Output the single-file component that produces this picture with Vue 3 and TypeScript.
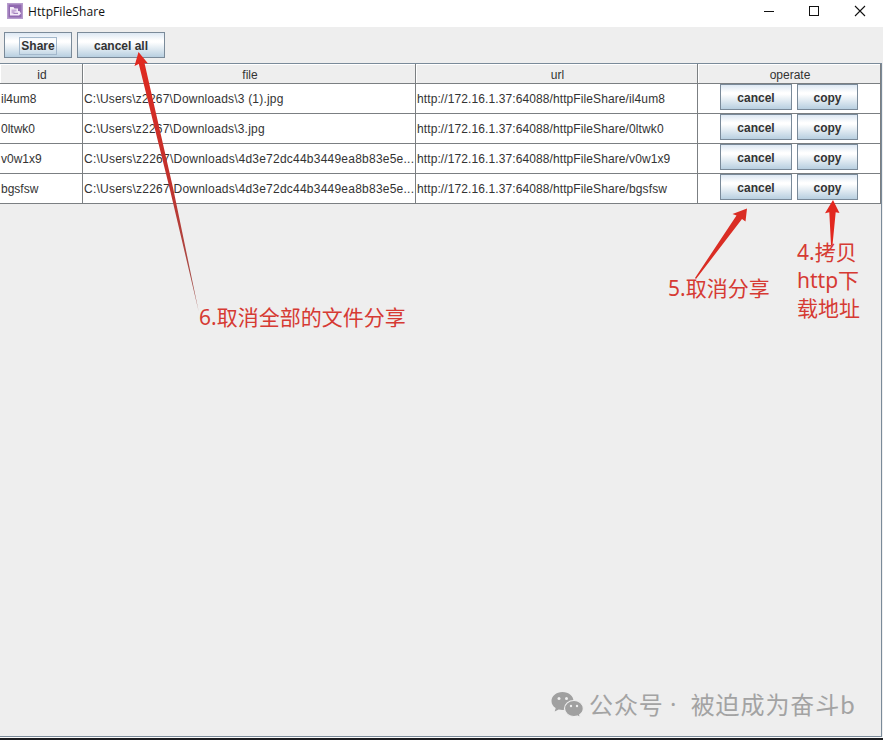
<script setup lang="ts">
interface SharedFile {
  id: string
  file: string
  url: string
}

const base = 'http://172.16.1.37:64088/httpFileShare/'
const downloads = 'C:\\Users\\z2267\\Downloads\\'

const files: SharedFile[] = [
  { id: 'il4um8', file: downloads + '3 (1).jpg', url: base + 'il4um8' },
  { id: '0ltwk0', file: downloads + '3.jpg', url: base + '0ltwk0' },
  { id: 'v0w1x9', file: downloads + '4d3e72dc44b3449ea8b83e5e...', url: base + 'v0w1x9' },
  { id: 'bgsfsw', file: downloads + '4d3e72dc44b3449ea8b83e5e...', url: base + 'bgsfsw' },
]

const columns: string[] = ['id', 'file', 'url', 'operate']
</script>

<template>
  <div class="window">
    <header class="titlebar">
      <svg class="app-icon" width="16" height="16" viewBox="0 0 16 16">
        <rect width="16" height="16" fill="#b79ccd" />
        <rect x="1.500" y="1.500" width="13" height="13" fill="#9068b0" />
        <path d="M3 4h3.500l1 1.500H11V8h1.500l1.500 2.500-2 2H3z" fill="#f4ebf8" />
        <path d="M4.500 6.500h5V8.500h-2v2h-3z" fill="#c4a9d6" />
        <path d="M6.500 10.300h4.500" stroke="#9068b0" />
      </svg>
      <span class="title">HttpFileShare</span>
      <svg class="controls" width="102" height="12" viewBox="0 0 102 12" fill="none" stroke="#111">
        <path d="M0 6.500h10" />
        <rect x="45.500" y="1.500" width="9" height="9" />
        <path d="M91 1l10 10M101 1L91 11" stroke-width="1.100" />
      </svg>
    </header>

    <div class="toolbar">
      <button class="btn share"><span class="focus">Share</span></button>
      <button class="btn all">cancel all</button>
    </div>

    <main class="pane">
      <div class="row head">
        <div v-for="name in columns" :key="name" class="cell">{{ name }}</div>
      </div>
      <div v-for="item in files" :key="item.id" class="row">
        <div class="cell">{{ item.id }}</div>
        <div class="cell path" :class="{ clipped: item.file.endsWith('...') }">{{ item.file }}</div>
        <div class="cell url">{{ item.url }}</div>
        <div class="cell actions">
          <button class="btn cancel">cancel</button>
          <button class="btn copy">copy</button>
        </div>
      </div>
    </main>
    <div class="desktop-edge"></div>

    <svg class="arrows" width="883" height="740" viewBox="0 0 883 740">
      <defs>
        <linearGradient id="longShaft" x1="0" y1="0" x2="0" y2="1">
          <stop offset="0" stop-color="#e2281f" />
          <stop offset="0.5" stop-color="#c0322d" />
          <stop offset="1" stop-color="#9e5550" />
        </linearGradient>
      </defs>
      <path d="M138.500 52l9.500 11.500-3.500-.5L173.500 190 198.800 312 170 190 138.800 64l-4.300 2z" fill="url(#longShaft)" />
      <path d="M747 208.500l-1.500 13-3.500-2.500L696 279l-1-1 41.500-62.500-4-1.500z" fill="#da2d24" />
      <path d="M833 200l6.500 13-3.800-.7L832.500 245h-1.500l-1.700-32.700-4.300.9z" fill="#e2281f" />
    </svg>

    <p class="note note-all">6.取消全部的文件分享</p>
    <p class="note note-cancel">5.取消分享</p>
    <p class="note note-copy">4.拷贝<br />http下<br />载地址</p>

    <div class="watermark">
      <svg width="33" height="28" viewBox="0 0 33 28">
        <path d="M11.500 1C5.200 1 .5 5 .5 10c0 3 1.600 5.400 4.200 7l-1 3.500 4-2.100c1.200.3 2.500.5 3.800.5 6.300 0 11-4 11-8.900S17.800 1 11.500 1z" fill="#a0a0a0" />
        <path d="M23 9.500c-5.400 0-9.500 3.600-9.500 8s4.100 8 9.500 8c1.200 0 2.300-.2 3.300-.5l3.200 1.800-.8-3c2.200-1.500 3.600-3.700 3.600-6.300 0-4.400-4-8-9.300-8z" fill="#a0a0a0" stroke="#eee" stroke-width="1.200" />
        <g fill="#eee">
          <circle cx="8" cy="7.500" r="1.500" /><circle cx="15.500" cy="7.500" r="1.500" />
          <circle cx="20" cy="15" r="1.200" /><circle cx="26" cy="15" r="1.200" />
        </g>
      </svg>
      <span class="account">公众号</span><span class="dot">·</span><span class="name">被迫成为奋斗b</span>
    </div>
  </div>
</template>

<style>
body {
  overflow: hidden;
}
</style>

<style scoped>
.window {
  position: relative;
  display: flex;
  flex-direction: column;
  box-sizing: border-box;
  width: 883px;
  height: 740px;
  background: #eee;
  color: #333;
  font: 12px/15px "Liberation Sans", Arial, sans-serif;
}
.titlebar {
  display: flex;
  align-items: center;
  box-sizing: border-box;
  height: 27px;
  padding: 0 17px 4px 7px;
  background: #fff;
}
.app-icon {
  margin-top: -1px;
}
.title {
  margin-left: 5px;
  color: #111;
  font: 12px/16px "Open Sans", "Noto Sans", sans-serif;
  letter-spacing: 0.08px;
}
.controls {
  margin: -1px 0 0 auto;
}
.toolbar {
  display: flex;
  box-sizing: border-box;
  height: 36px;
  padding: 5px 4px;
  gap: 5px;
}
.btn {
  display: flex;
  align-items: center;
  justify-content: center;
  box-sizing: border-box;
  height: 26px;
  margin: 0;
  padding: 3px 0 0;
  border: 1px solid #7a8a99;
  border-radius: 0;
  background: linear-gradient(#dde8f3 0, #fff 32%, #fff 38%, #b8cfe0 100%);
  color: #333;
  font: bold 12px/15px "Liberation Sans", Arial, sans-serif;
}
.share {
  width: 68px;
  padding-top: 1px;
}
.focus {
  box-sizing: border-box;
  height: 18px;
  padding: 0 1px;
  border: 1px solid #a3b8cc;
  line-height: 17px;
}
.all {
  width: 88px;
}
.pane {
  flex: 1;
  box-sizing: border-box;
  width: 882px;
  border: solid #7a8a99;
  border-width: 1px 1px 1px 0;
}
.row {
  display: grid;
  grid-template-columns: 83px 333px 282px 183px;
  height: 30px;
  background: #fff;
}
.cell {
  box-sizing: border-box;
  padding: 8px 0 0 1px;
  border: solid #7b7f82;
  border-width: 0 1px 1px 0;
  white-space: nowrap;
}
.path {
  letter-spacing: 0.2px;
}
.clipped {
  letter-spacing: 0.23px;
}
.url {
  letter-spacing: 0.1px;
}
.head {
  height: 20px;
  background: #eee;
}
.head .cell {
  padding: 4px 0 0 2px;
  text-align: center;
  box-shadow: inset 1px 1px #fff;
}
.actions {
  display: flex;
  justify-content: center;
  gap: 5px;
  padding: 0;
}
.cancel {
  width: 72px;
}
.copy {
  width: 61px;
}
.desktop-edge {
  height: 2px;
  border-top: 1px solid #fafafa;
  background: #1c1d21;
}
.arrows {
  position: absolute;
  inset: 0;
}
.note {
  position: absolute;
  margin: 0;
  color: #d63a33;
  font: 21px/28px "Noto Sans", "Noto Sans CJK SC", sans-serif;
  white-space: nowrap;
}
.note-all {
  left: 199px;
  top: 303px;
}
.note-cancel {
  left: 668px;
  top: 274px;
}
.note-copy {
  left: 797px;
  top: 238px;
}
.watermark {
  position: absolute;
  left: 551px;
  top: 691px;
  display: flex;
  align-items: center;
  color: #a3a3a3;
  font: 24px/28px "Noto Sans CJK SC", sans-serif;
  letter-spacing: 0.9px;
  white-space: nowrap;
}
.account,
.dot,
.name {
  margin-top: -2px;
}
.account {
  margin-left: 5px;
}
.dot {
  width: 20px;
  margin-right: 7px;
  font-family: "Noto Sans", sans-serif;
  text-align: center;
}
</style>
